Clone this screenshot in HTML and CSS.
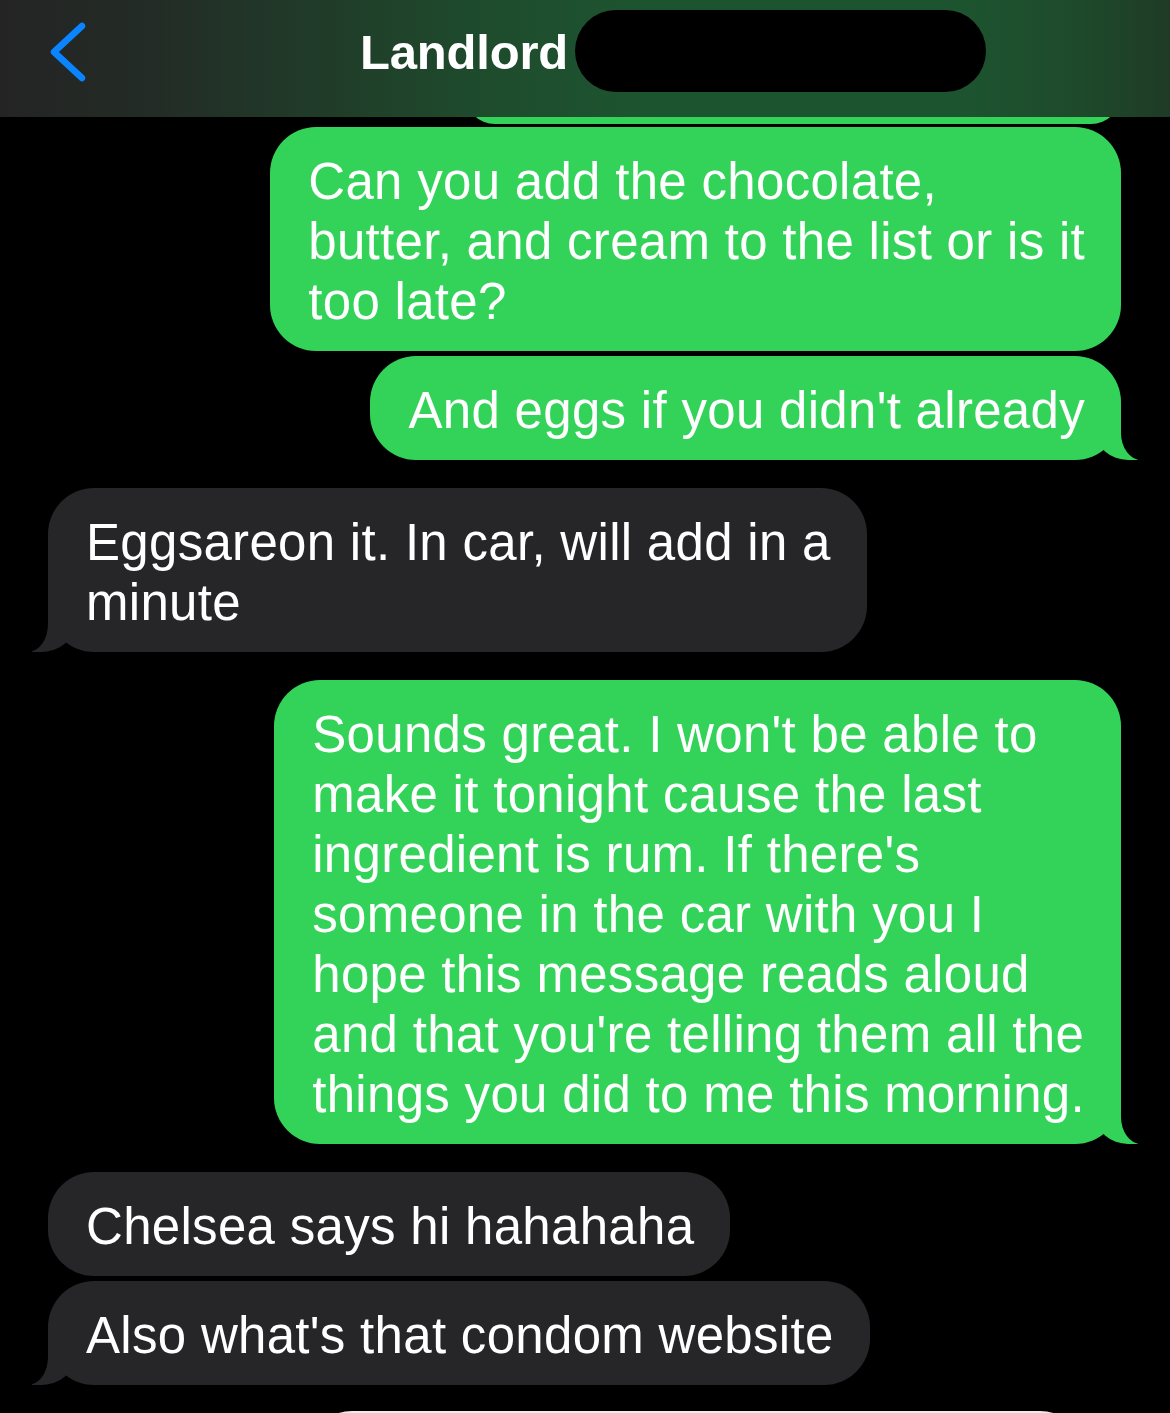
FILE: index.html
```html
<!DOCTYPE html>
<html lang="en">
<head>
<meta charset="utf-8">
<title>Landlord</title>
<link rel="stylesheet" href="styles.css">
</head>
<body>
<div class="screen">
  <header class="nav">
    <svg class="back" width="40" height="64" viewBox="0 0 40 64" aria-hidden="true">
      <path d="M32 4 L4 30 L32 56" fill="none" stroke="#0a84ff" stroke-width="6.5" stroke-linecap="round" stroke-linejoin="round"/>
    </svg>
    <h1 class="title">Landlord</h1>
    <div class="redact"></div>
  </header>
  <main class="thread">
    <div class="msg sent prev"></div>
    <div class="msg sent first">Can you add the chocolate,<br>butter, and cream to the list or is it<br>too late?</div>
    <div class="msg sent grp tail">And eggs if you didn't already</div>
    <div class="msg recv new tail">Eggsareon it. In car, will add in a<br>minute</div>
    <div class="msg sent new tail">Sounds great. I won't be able to<br>make it tonight cause the last<br>ingredient is rum. If there's<br>someone in the car with you I<br>hope this message reads aloud<br>and that you're telling them all the<br>things you did to me this morning.</div>
    <div class="msg recv new">Chelsea says hi hahahaha</div>
    <div class="msg recv grp tail">Also what's that condom website</div>
    <div class="msg next"></div>
  </main>
</div>
</body>
</html>
```

FILE: styles.css
```css
html, body {
  margin: 0;
  padding: 0;
  background: #000;
}

.screen {
  width: 1170px;
  height: 1413px;
  overflow: hidden;
  background: #000;
  font-family: "Liberation Sans", Arial, sans-serif;
  color: #fff;
}

.nav {
  position: relative;
  z-index: 2;
  height: 117px;
  box-sizing: border-box;
  padding-top: 10px;
  display: flex;
  align-items: flex-start;
  background: linear-gradient(90deg, #242424 0%, #232b26 12%, #203c29 28%, #1e4c2d 42%, #1d5430 55%, #1d5430 82%, #1e4a2b 92%, #1f3b25 100%);
}

.back {
  display: block;
  margin-left: 50px;
  margin-top: 12px;
  width: 40px;
  height: 64px;
}

.title {
  margin: 0 0 0 270px;
  height: 82px;
  line-height: 84px;
  font-size: 49px;
  font-weight: 700;
  letter-spacing: -0.2px;
  color: #fff;
}

.redact {
  margin-left: 7px;
  width: 411px;
  height: 82px;
  border-radius: 41px;
  background: #000;
}

.thread {
  position: relative;
  z-index: 1;
  display: flex;
  flex-direction: column;
}

.msg {
  position: relative;
  box-sizing: border-box;
  padding: 25px 36px 19px 38px;
  border-radius: 46px;
  font-size: 51px;
  line-height: 60px;
  letter-spacing: 0.3px;
  white-space: nowrap;
}

.sent {
  align-self: flex-end;
  margin-right: 49px;
  background: #33d35a;
}

.recv {
  align-self: flex-start;
  margin-left: 48px;
  background: #262629;
}

.prev {
  width: 656px;
  height: 60px;
  padding: 0;
  margin-top: -53px;
}

.first {
  margin-top: 3px;
}

.grp {
  margin-top: 5px;
}

.new {
  margin-top: 28px;
}

.next {
  align-self: flex-start;
  margin-top: 26px;
  margin-left: 306px;
  width: 780px;
  height: 100px;
  padding: 0;
  background: #ececec;
}

/* bubble tails */
.sent.tail::before,
.sent.tail::after,
.recv.tail::before,
.recv.tail::after {
  content: "";
  position: absolute;
  bottom: 0;
  height: 50px;
}

.sent.tail::before {
  right: -17px;
  width: 42px;
  background: #33d35a;
  border-bottom-left-radius: 32px 28px;
}

.sent.tail::after {
  right: -60px;
  width: 60px;
  background: #000;
  border-bottom-left-radius: 20px 27px;
}

.recv.tail::before {
  left: -16px;
  width: 42px;
  background: #262629;
  border-bottom-right-radius: 32px 28px;
}

.recv.tail::after {
  left: -60px;
  width: 60px;
  background: #000;
  border-bottom-right-radius: 20px 28px;
}
```
